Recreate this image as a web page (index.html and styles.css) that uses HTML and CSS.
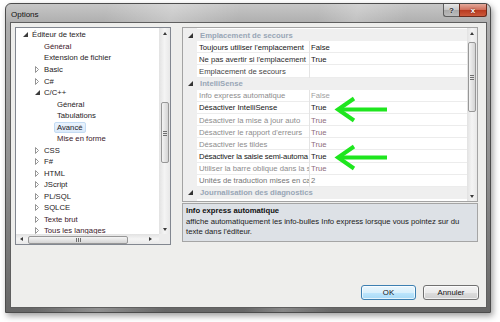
FILE: index.html
```html
<!DOCTYPE html>
<html lang="fr">
<head>
<meta charset="utf-8">
<title>Options</title>
<link rel="stylesheet" href="styles.css">
</head>
<body>
<div class="window">
  <div class="titlebar">
    <span class="title">Options</span>
    <div class="caption-btns">
      <div class="cbtn help">?</div>
      <div class="cbtn close">x</div>
    </div>
  </div>
  <div class="client">
    <div class="panes">
      <div class="tree">
        <div class="tree-main">
          <div class="tree-items">
            <div class="node l0"><span class="exp"><svg width="5" height="5" viewBox="0 0 5 5"><path d="M5 0V5H0Z" fill="#3c3c3c"/></svg></span>Éditeur de texte</div>
            <div class="node l1 m">Général</div>
            <div class="node l1">Extension de fichier</div>
            <div class="node l1"><span class="exp"><svg width="4" height="7" viewBox="0 0 4 7"><path d="M.5 .5L3.5 3.5L.5 6.5Z" fill="none" stroke="#959595"/></svg></span>Basic</div>
            <div class="node l1"><span class="exp"><svg width="4" height="7" viewBox="0 0 4 7"><path d="M.5 .5L3.5 3.5L.5 6.5Z" fill="none" stroke="#959595"/></svg></span>C#</div>
            <div class="node l1"><span class="exp"><svg width="5" height="5" viewBox="0 0 5 5"><path d="M5 0V5H0Z" fill="#3c3c3c"/></svg></span>C/C++</div>
            <div class="node l2">Général</div>
            <div class="node l2">Tabulations</div>
            <div class="node l2"><span class="sel">Avancé</span></div>
            <div class="node l2 m">Mise en forme</div>
            <div class="node l1"><span class="exp"><svg width="4" height="7" viewBox="0 0 4 7"><path d="M.5 .5L3.5 3.5L.5 6.5Z" fill="none" stroke="#959595"/></svg></span>CSS</div>
            <div class="node l1"><span class="exp"><svg width="4" height="7" viewBox="0 0 4 7"><path d="M.5 .5L3.5 3.5L.5 6.5Z" fill="none" stroke="#959595"/></svg></span>F#</div>
            <div class="node l1"><span class="exp"><svg width="4" height="7" viewBox="0 0 4 7"><path d="M.5 .5L3.5 3.5L.5 6.5Z" fill="none" stroke="#959595"/></svg></span>HTML</div>
            <div class="node l1"><span class="exp"><svg width="4" height="7" viewBox="0 0 4 7"><path d="M.5 .5L3.5 3.5L.5 6.5Z" fill="none" stroke="#959595"/></svg></span>JScript</div>
            <div class="node l1"><span class="exp"><svg width="4" height="7" viewBox="0 0 4 7"><path d="M.5 .5L3.5 3.5L.5 6.5Z" fill="none" stroke="#959595"/></svg></span>PL/SQL</div>
            <div class="node l1"><span class="exp"><svg width="4" height="7" viewBox="0 0 4 7"><path d="M.5 .5L3.5 3.5L.5 6.5Z" fill="none" stroke="#959595"/></svg></span>SQLCE</div>
            <div class="node l1 m"><span class="exp"><svg width="4" height="7" viewBox="0 0 4 7"><path d="M.5 .5L3.5 3.5L.5 6.5Z" fill="none" stroke="#959595"/></svg></span>Texte brut</div>
            <div class="node l1 m"><span class="exp"><svg width="4" height="7" viewBox="0 0 4 7"><path d="M.5 .5L3.5 3.5L.5 6.5Z" fill="none" stroke="#959595"/></svg></span>Tous les langages</div>
          </div>
          <div class="vscroll tree-v">
            <div class="sb-btn"><i class="tri up"></i></div>
            <div class="sb-track"><div class="thumb vthumb tree-thumb"></div></div>
            <div class="sb-btn"><i class="tri down"></i></div>
          </div>
        </div>
        <div class="tree-bottom">
          <div class="hscroll">
            <div class="sb-btn h"><i class="tri left"></i></div>
            <div class="sb-track h"><div class="thumb hthumb"></div></div>
            <div class="sb-btn h"><i class="tri right"></i></div>
          </div>
          <div class="corner"></div>
        </div>
      </div>

      <div class="right">
        <div class="grid">
          <div class="rows">
            <div class="row cat"><span class="gut"><svg width="5" height="5" viewBox="0 0 5 5"><path d="M5 0V5H0Z" fill="#333"/></svg></span><span class="cname">Emplacement de secours</span></div>
            <div class="row"><span class="gut"></span><span class="name k">Toujours utiliser l'emplacement</span><span class="val k">False</span></div>
            <div class="row"><span class="gut"></span><span class="name d">Ne pas avertir si l'emplacement</span><span class="val k">True</span></div>
            <div class="row"><span class="gut"></span><span class="name d2">Emplacement de secours</span><span class="val"></span></div>
            <div class="row cat"><span class="gut"><svg width="5" height="5" viewBox="0 0 5 5"><path d="M5 0V5H0Z" fill="#333"/></svg></span><span class="cname">IntelliSense</span></div>
            <div class="row"><span class="gut"></span><span class="name g">Info express automatique</span><span class="val g2">False</span></div>
            <div class="row"><span class="gut"></span><span class="name k">Désactiver IntelliSense</span><span class="val k">True</span></div>
            <div class="row"><span class="gut"></span><span class="name g">Désactiver la mise à jour auto</span><span class="val mg">True</span></div>
            <div class="row"><span class="gut"></span><span class="name g">Désactiver le rapport d'erreurs</span><span class="val mg">True</span></div>
            <div class="row"><span class="gut"></span><span class="name g">Désactiver les tildes</span><span class="val mg">True</span></div>
            <div class="row"><span class="gut"></span><span class="name k tight">Désactiver la saisie semi-automa</span><span class="val k">True</span></div>
            <div class="row"><span class="gut"></span><span class="name g">Utiliser la barre oblique dans la s</span><span class="val mg">True</span></div>
            <div class="row"><span class="gut"></span><span class="name g3">Unités de traduction mises en ca</span><span class="val g3">2</span></div>
            <div class="row cat"><span class="gut"><svg width="5" height="5" viewBox="0 0 5 5"><path d="M5 0V5H0Z" fill="#333"/></svg></span><span class="cname">Journalisation des diagnostics</span></div>
          </div>
          <div class="vscroll grid-v">
            <div class="sb-btn"><i class="tri up"></i></div>
            <div class="sb-track"><div class="thumb vthumb grid-thumb"></div></div>
            <div class="sb-btn"><i class="tri down"></i></div>
          </div>
          <svg class="arrows" width="294" height="173" viewBox="0 0 294 173">
            <g stroke="#1ee61e" stroke-width="4" fill="none">
              <path d="M157 81.5H204"/>
              <path d="M171 70.5L155 81.5L171 92.5"/>
              <path d="M157 129.5H204"/>
              <path d="M171 118.5L155 129.5L171 140.5"/>
            </g>
          </svg>
        </div>
        <div class="desc">
          <div class="desc-title">Info express automatique</div>
          <div class="desc-text">affiche automatiquement les info-bulles Info express lorsque vous pointez sur du<br>texte dans l'éditeur.</div>
        </div>
      </div>
    </div>
    <div class="buttons">
      <div class="btn ok">OK</div>
      <div class="btn">Annuler</div>
    </div>
  </div>
</div>
</body>
</html>
```
FILE: styles.css
```css
* { box-sizing: border-box; margin: 0; padding: 0; }
html, body { width: 500px; height: 322px; overflow: hidden; background: #fff; }
body { font-family: "Liberation Sans", Arial, sans-serif; font-size: 7.7px; color: #1c1c1c; }

.window {
  margin: 3px 0 0 5px;
  width: 486px;
  height: 310px;
  display: flex;
  flex-direction: column;
  padding: 0 3px 4px 4px;
  border: 1px solid #4c4c4c;
  border-radius: 6px 6px 0 0;
  background:
    linear-gradient(104deg, rgba(255,255,255,0) 18%, rgba(255,255,255,.28) 30%, rgba(255,255,255,0) 42%, rgba(255,255,255,0) 56%, rgba(255,255,255,.22) 63%, rgba(255,255,255,0) 72%),
    linear-gradient(180deg, #c6c6c6 0, #adadad 20px, #8e8e8e 55%, #666 100%);
  box-shadow: 2px 3px 6px rgba(0,0,0,.38);
}

.titlebar { height: 18px; display: flex; align-items: flex-start; justify-content: space-between; }
.title { font-size: 8px; color: #111; padding: 6px 0 0 1px; line-height: 9px; }
.caption-btns { display: flex; height: 13px; }
.cbtn { height: 13px; display: flex; align-items: center; justify-content: center; font-weight: bold; border: 1px solid #5e5e5e; border-top: none; }
.help {
  width: 16px; font-size: 8px; color: #2a2a2a;
  background: linear-gradient(#e6e6e6, #c6c6c6 50%, #a9a9a9 51%, #bcbcbc);
  border-radius: 0 0 0 3px; border-right: none;
  text-shadow: 0 0 2px #fff;
}
.close {
  width: 28px; font-size: 8px; color: #fff;
  background: linear-gradient(#e3a99b, #cf6c58 50%, #b8391f 51%, #cc5a3c);
  border-color: #6b2a1c; border-radius: 0 0 3px 0;
  text-shadow: 0 0 2px #4a0c00;
}

.client {
  flex: 1;
  display: flex;
  flex-direction: column;
  background: #eeeeec;
  border: 1px solid #5f5f5f;
  padding: 4px 7px 7px 4px;
}

.panes { display: flex; align-items: flex-start; gap: 11px; }

/* tree */
.tree { width: 156px; height: 218px; border: 1px solid #828790; background: #fff; display: flex; flex-direction: column; }
.tree-main { flex: 1; display: flex; min-height: 0; }
.tree-items { flex: 1; overflow: hidden; padding-top: 1.2px; }
.node { height: 11.53px; display: flex; align-items: center; white-space: nowrap; color: #1e1a1c; }
.node.m { color: #3a1628; }
.l0 { padding-left: 16px; }
.l1 { padding-left: 28px; }
.l2 { padding-left: 41px; }
.exp { width: 14px; margin-left: -14px; display: flex; justify-content: center; align-items: center; }
.exp svg { display: block; }
.sel { margin-left: -3px; padding: 0 2px; height: 11px; line-height: 9px; border: 1px solid #c3dbf3; border-radius: 2px; background: linear-gradient(#eaf3fd, #dbeafa); }

.tree-bottom { height: 10px; display: flex; }
.corner { width: 11px; background: #ececec; }

/* scrollbars */
.vscroll { display: flex; flex-direction: column; background: linear-gradient(90deg, #e2e2e2, #f4f4f4 50%, #e8e8e8); }
.tree-v { width: 11px; }
.grid-v { width: 10px; }
.sb-btn { height: 10px; display: flex; align-items: center; justify-content: center; flex: none; }
.sb-btn.h { width: 10px; height: 10px; }
.sb-track { flex: 1; display: flex; flex-direction: column; align-items: center; }
.sb-track.h { flex-direction: row; }
.hscroll { flex: 1; display: flex; background: linear-gradient(180deg, #e2e2e2, #f4f4f4 50%, #e8e8e8); }

.thumb { position: relative; border: 1px solid #979797; border-radius: 2px; }
.vthumb { width: 8px; background: linear-gradient(90deg, #f4f4f4, #e4e4e4 50%, #d4d4d4); }
.tree-thumb { margin-top: 64px; height: 61px; }
.grid-thumb { margin-top: 4px; height: 70px; }
.vthumb::after {
  content: ""; position: absolute; left: 1px; top: 50%; width: 4px; height: 5px; margin-top: -2px;
  background: repeating-linear-gradient(180deg, #6f6f6f 0 1px, transparent 1px 2px);
}
.hthumb { margin-left: 2px; width: 100px; height: 8px; margin-top: 1px; background: linear-gradient(180deg, #f4f4f4, #e4e4e4 50%, #d4d4d4); }
.hthumb::after {
  content: ""; position: absolute; top: 1px; left: 50%; width: 5px; height: 4px; margin-left: -2px;
  background: repeating-linear-gradient(90deg, #6f6f6f 0 1px, transparent 1px 2px);
}

.tri { display: block; width: 0; height: 0; }
.tri.up { border-left: 2.5px solid transparent; border-right: 2.5px solid transparent; border-bottom: 3px solid #3b3b3b; }
.tri.down { border-left: 2.5px solid transparent; border-right: 2.5px solid transparent; border-top: 3px solid #3b3b3b; }
.tri.left { border-top: 2.5px solid transparent; border-bottom: 2.5px solid transparent; border-right: 3px solid #3b3b3b; }
.tri.right { border-top: 2.5px solid transparent; border-bottom: 2.5px solid transparent; border-left: 3px solid #3b3b3b; }

/* right column */
.right { width: 296px; display: flex; flex-direction: column; gap: 1px; }
.grid { position: relative; height: 175px; border: 1px solid #a3a3a3; background: #fff; display: flex; }
.rows { flex: 1; overflow: hidden; padding-top: 1px; background: linear-gradient(90deg, #efefef 0 14px, #fff 14px); }
.row { height: 12.15px; display: flex; align-items: stretch; white-space: nowrap; }
.gut { width: 14px; flex: none; display: flex; align-items: center; justify-content: center; }
.gut svg { display: block; }
.row.cat { background: #efefef; }
.cname { padding-left: 3px; font-weight: bold; color: #98a6b6; display: flex; align-items: center; }
.name { width: 113px; flex: none; overflow: hidden; padding-left: 2px; display: flex; align-items: center; border-right: 1px solid #e4e4e4; box-shadow: inset 0 -1px 0 #ececec; }
.name.tight { letter-spacing: -0.12px; }
.val { flex: 1; padding-left: 1px; display: flex; align-items: center; box-shadow: inset 0 -1px 0 #ececec; }
.k { color: #141414; }
.d { color: #2c2c2c; }
.d2 { color: #454545; }
.g { color: #8c8c8c; }
.g2 { color: #a0a0a0; }
.g3 { color: #747474; }
.mg { color: #8e6c7c; }

.arrows { position: absolute; left: 0; top: 0; pointer-events: none; }

.desc { height: 39px; border: 1px solid #a5a5a5; background: #dde1e6; padding: 1px 3px; }
.desc-title { font-weight: bold; line-height: 11px; color: #111; }
.desc-text { margin-top: 1px; line-height: 9.5px; color: #1a1a1a; }

/* buttons */
.buttons { margin-top: auto; display: flex; justify-content: flex-end; gap: 7px; }
.btn {
  width: 56px; height: 15px; display: flex; align-items: center; justify-content: center;
  font-size: 7.8px; color: #111;
  border: 1px solid #707070; border-radius: 3px;
  background: linear-gradient(#f3f3f3, #ebebeb 50%, #dddddd 51%, #cfcfcf);
  box-shadow: inset 0 0 0 1px rgba(255,255,255,.7);
}
.btn.ok {
  width: 55px;
  border-color: #3c7fb1;
  background: linear-gradient(#eaf6fd, #d9f0fc 50%, #bee6fd 51%, #a7d9f5);
}
```
